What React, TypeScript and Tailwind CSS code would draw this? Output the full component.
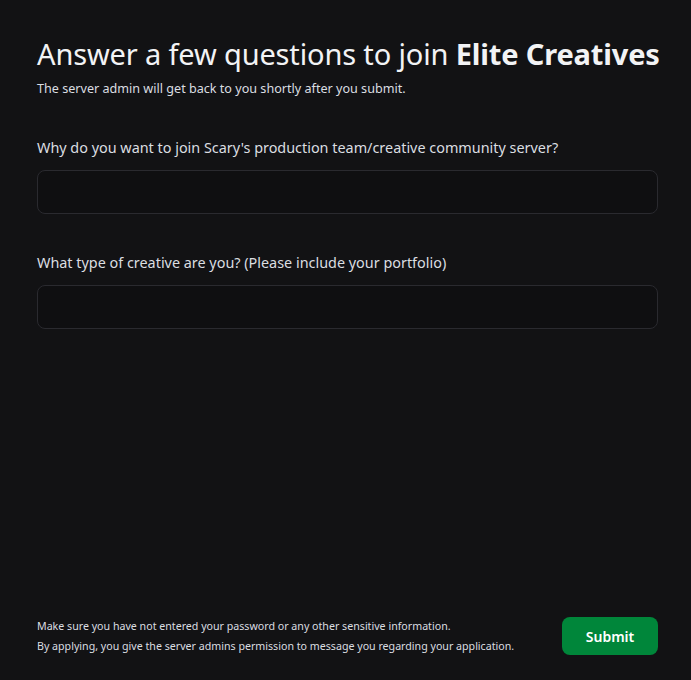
export default function App() {
  const questions = [
    "Why do you want to join Scary's production team/creative community server?",
    "What type of creative are you? (Please include your portfolio)",
  ];
  return (
    <div
      className="w-[691px] h-[680px] bg-[#121214] text-[#dbdee1] flex flex-col pl-[37px] pr-[33px]"
      style={{ fontFamily: '"Noto Sans", "Open Sans", sans-serif' }}
    >
      <div className="pt-[36px]">
        <h1 className="whitespace-nowrap text-[29px] leading-[36px] text-[#f2f3f5] tracking-[-0.15px]">
          Answer a few questions to join <span className="font-bold">Elite Creatives</span>
        </h1>
        <p className="mt-[8px] text-[12.6px] leading-[18px] text-[#dbdee1]">
          The server admin will get back to you shortly after you submit.
        </p>
      </div>

      <div className="mt-[40px] flex flex-col gap-[39px]">
        {questions.map((q) => (
          <div key={q} className="flex flex-col">
            <label className="text-[14.4px] leading-[20px] text-[#dbdee1]">{q}</label>
            <input
              className="mt-[12px] h-[44px] w-full rounded-[8px] border border-[#2a2a2f] bg-[#0f0f11] px-3 text-[15px] outline-none"
              type="text"
            />
          </div>
        ))}
      </div>

      <div className="mt-auto mb-[24px] flex items-center justify-between">
        <div className="text-[10.65px] leading-[20px] text-[#dbdee1] whitespace-nowrap">
          <p>Make sure you have not entered your password or any other sensitive information.</p>
          <p>By applying, you give the server admins permission to message you regarding your application.</p>
        </div>
        <button className="h-[38px] w-[96px] rounded-[8px] bg-[#00863a] text-[14px] font-semibold text-white">
          Submit
        </button>
      </div>
    </div>
  );
}
